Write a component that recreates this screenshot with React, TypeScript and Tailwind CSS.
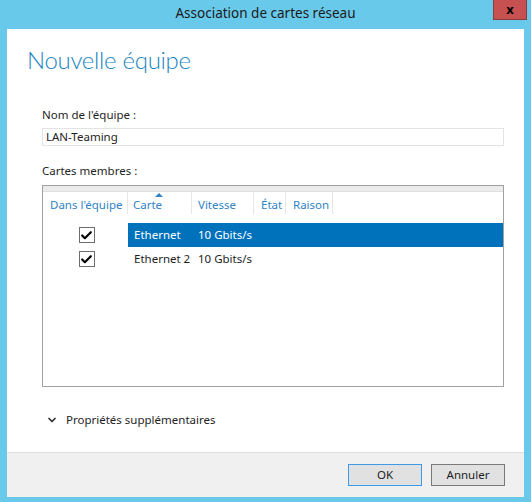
import { ChevronDown, Check } from 'lucide-react';

const font = { fontFamily: '"Noto Sans", "Open Sans", sans-serif' };

interface Adapter {
  name: string;
  speed: string;
  selected: boolean;
}

const adapters: Adapter[] = [
  { name: 'Ethernet', speed: '10 Gbits/s', selected: true },
  { name: 'Ethernet 2', speed: '10 Gbits/s', selected: false },
];

function CheckBox() {
  return (
    <div className="w-[16px] h-[16px] border border-[#6d6d6d] bg-white flex items-center justify-center">
      <Check className="w-[13px] h-[13px] text-black" strokeWidth={4} />
    </div>
  );
}

export default function App() {
  return (
    <div
      className="w-[531px] h-[502px] bg-[#69c9ea] flex flex-col text-[11.5px] text-[#1e1e1e]"
      style={font}
    >
      {/* Title bar */}
      <div className="relative h-[29px] flex items-center justify-center shrink-0">
        <span className="text-[13.5px] text-[#1a1a1a] pb-[2px]">Association de cartes réseau</span>
        <div className="absolute top-0 right-[4px] w-[34px] h-[20px] bg-[#c75050] border border-[#8f3a3a] border-t-0 flex items-center justify-center">
          <span className="text-[13px] font-bold leading-none text-black">x</span>
        </div>
      </div>

      {/* Client area */}
      <div className="mx-[7px] mb-[5px] flex-1 bg-white flex flex-col">
        <div className="flex-1 flex flex-col">
          {/* Heading */}
          <h1
            className="mt-[15px] ml-[20px] text-[24px] leading-[32px] font-light tracking-[-0.3px] text-[#1d86c2]"
            style={{ fontFamily: 'Lato, "Open Sans", sans-serif' }}
          >
            Nouvelle équipe
          </h1>

          <div className="ml-[35px] mr-[20px] flex flex-col">
            <label className="mt-[31px] leading-[16px]">Nom de l'équipe :</label>
            <div className="mt-[5px] h-[18px] border border-[#e3e3e6] flex items-center pl-[3px] leading-none">
              LAN-Teaming
            </div>

            <label className="mt-[17px] leading-[16px]">Cartes membres :</label>

            {/* Member adapters list */}
            <div className="mt-[6px] h-[202px] border border-[#a0a0a0] flex flex-col">
              <div className="h-[6px] bg-[#ebebeb] border-b border-[#e0e0e0]" />
              <div className="flex h-[22px] text-[#2f83c6] whitespace-nowrap">
                <div className="w-[85px] border-r border-[#e6e6e6] pl-[7px] flex items-end pb-[1px]">
                  Dans l'équipe
                </div>
                <div className="relative w-[64px] border-r border-[#e6e6e6] pl-[5px] flex items-end pb-[1px]">
                  Carte
                  <div className="absolute top-[1px] left-[27px] w-0 h-0 border-l-[4px] border-r-[4px] border-b-[4px] border-l-transparent border-r-transparent border-b-[#2f83c6]" />
                </div>
                <div className="w-[62px] border-r border-[#e6e6e6] pl-[6px] flex items-end pb-[1px]">Vitesse</div>
                <div className="w-[32px] border-r border-[#e6e6e6] pl-[7px] flex items-end pb-[1px]">État</div>
                <div className="w-[47px] border-r border-[#e6e6e6] pl-[7px] flex items-end pb-[1px]">Raison</div>
              </div>

              <div className="mt-[9px] flex flex-col">
                {adapters.map((a) => (
                  <div key={a.name} className="flex h-[24px] items-center whitespace-nowrap">
                    <div className="w-[85px] flex justify-center pl-[2px]">
                      <CheckBox />
                    </div>
                    <div
                      className={
                        a.selected
                          ? 'flex-1 h-full flex items-center bg-[#0072bb] text-white'
                          : 'flex-1 h-full flex items-center'
                      }
                    >
                      <span className="w-[64px] pl-[6px]">{a.name}</span>
                      <span className="pl-[6px]">{a.speed}</span>
                    </div>
                  </div>
                ))}
              </div>
            </div>

            <div className="mt-[24px] flex items-center gap-[8px] pl-[4px]">
              <ChevronDown className="w-[12px] h-[12px] text-[#333]" strokeWidth={3.5} />
              <span>Propriétés supplémentaires</span>
            </div>
          </div>
        </div>

        {/* Footer */}
        <div className="h-[45px] bg-[#f0f0f0] border-t border-[#dfdfdf] flex items-center justify-end gap-[9px] pr-[19px] shrink-0">
          <button className="w-[74px] h-[22px] bg-[#e1e1e1] border border-[#3c9ae6] leading-none">OK</button>
          <button className="w-[74px] h-[22px] bg-[#e1e1e1] border border-[#7a7a7a] leading-none">Annuler</button>
        </div>
      </div>
    </div>
  );
}
